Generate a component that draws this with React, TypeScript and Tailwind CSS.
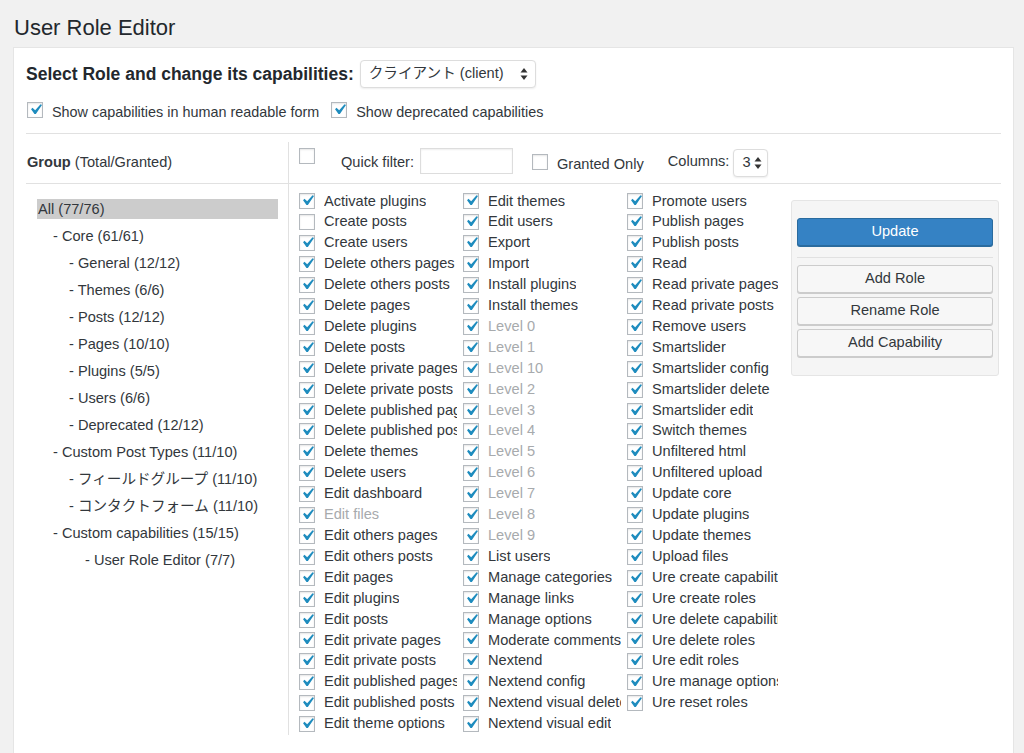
import React from "react";

const font = "font-['Liberation_Sans','Noto_Sans_CJK_JP',Arial,sans-serif]";

type Cap = { label: string; checked?: boolean; muted?: boolean };

const col1: Cap[] = [
  { label: "Activate plugins", checked: true },
  { label: "Create posts" },
  { label: "Create users", checked: true },
  { label: "Delete others pages", checked: true },
  { label: "Delete others posts", checked: true },
  { label: "Delete pages", checked: true },
  { label: "Delete plugins", checked: true },
  { label: "Delete posts", checked: true },
  { label: "Delete private pages", checked: true },
  { label: "Delete private posts", checked: true },
  { label: "Delete published pages", checked: true },
  { label: "Delete published posts", checked: true },
  { label: "Delete themes", checked: true },
  { label: "Delete users", checked: true },
  { label: "Edit dashboard", checked: true },
  { label: "Edit files", checked: true, muted: true },
  { label: "Edit others pages", checked: true },
  { label: "Edit others posts", checked: true },
  { label: "Edit pages", checked: true },
  { label: "Edit plugins", checked: true },
  { label: "Edit posts", checked: true },
  { label: "Edit private pages", checked: true },
  { label: "Edit private posts", checked: true },
  { label: "Edit published pages", checked: true },
  { label: "Edit published posts", checked: true },
  { label: "Edit theme options", checked: true },
];

const col2: Cap[] = [
  { label: "Edit themes", checked: true },
  { label: "Edit users", checked: true },
  { label: "Export", checked: true },
  { label: "Import", checked: true },
  { label: "Install plugins", checked: true },
  { label: "Install themes", checked: true },
  ...["0", "1", "10", "2", "3", "4", "5", "6", "7", "8", "9"].map((n) => ({
    label: `Level ${n}`,
    checked: true,
    muted: true,
  })),
  { label: "List users", checked: true },
  { label: "Manage categories", checked: true },
  { label: "Manage links", checked: true },
  { label: "Manage options", checked: true },
  { label: "Moderate comments", checked: true },
  { label: "Nextend", checked: true },
  { label: "Nextend config", checked: true },
  { label: "Nextend visual delete", checked: true },
  { label: "Nextend visual edit", checked: true },
];

const col3: Cap[] = [
  "Promote users",
  "Publish pages",
  "Publish posts",
  "Read",
  "Read private pages",
  "Read private posts",
  "Remove users",
  "Smartslider",
  "Smartslider config",
  "Smartslider delete",
  "Smartslider edit",
  "Switch themes",
  "Unfiltered html",
  "Unfiltered upload",
  "Update core",
  "Update plugins",
  "Update themes",
  "Upload files",
  "Ure create capabilities",
  "Ure create roles",
  "Ure delete capabilities",
  "Ure delete roles",
  "Ure edit roles",
  "Ure manage options",
  "Ure reset roles",
].map((label) => ({ label, checked: true }));

const groups = [
  { label: "All (77/76)", level: 0, active: true },
  { label: "- Core (61/61)", level: 1 },
  { label: "- General (12/12)", level: 2 },
  { label: "- Themes (6/6)", level: 2 },
  { label: "- Posts (12/12)", level: 2 },
  { label: "- Pages (10/10)", level: 2 },
  { label: "- Plugins (5/5)", level: 2 },
  { label: "- Users (6/6)", level: 2 },
  { label: "- Deprecated (12/12)", level: 2 },
  { label: "- Custom Post Types (11/10)", level: 1 },
  { label: "- フィールドグループ (11/10)", level: 2 },
  { label: "- コンタクトフォーム (11/10)", level: 2 },
  { label: "- Custom capabilities (15/15)", level: 1 },
  { label: "- User Role Editor (7/7)", level: 3 },
];

const indent = ["pl-[1px]", "pl-[16px]", "pl-[32px]", "pl-[48px]"];

function Box({ checked }: { checked?: boolean }) {
  return (
    <span className="relative inline-block h-4 w-4 shrink-0 border border-[#b4b9be] bg-white shadow-[inset_0_1px_2px_rgba(0,0,0,0.1)]">
      {checked && (
        <svg viewBox="0 0 20 20" className="absolute left-[-3px] top-[-4px] h-[21px] w-[21px]">
          <path d="M14.83 4.89l1.34.94-5.81 8.38H9.02L5.78 9.67l1.34-1.25 2.57 2.4z" fill="#1e8cbe" />
        </svg>
      )}
    </span>
  );
}

function Arrows() {
  return (
    <svg viewBox="0 0 8 14" className="h-[14px] w-[8px]">
      <path d="M4 1L7.5 5.5H0.5z" fill="#333" />
      <path d="M4 13L7.5 8.5H0.5z" fill="#333" />
    </svg>
  );
}

function CapColumn({ items, width }: { items: Cap[]; width: string }) {
  return (
    <div className="w-[164px] shrink-0">
      {items.map((c) => (
        <div key={c.label} className="flex h-[20.92px] items-center">
          <Box checked={c.checked} />
          <span
            className={`ml-[9px] overflow-hidden whitespace-nowrap text-[14.6px] ${width} ${
              c.muted ? "text-[#a7aaad]" : "text-[#32373c]"
            }`}
          >
            {c.label}
          </span>
        </div>
      ))}
    </div>
  );
}

export default function App() {
  return (
    <div className={`min-h-screen overflow-hidden bg-[#f1f1f1] pl-[13px] pr-[10px] ${font}`}>
      <h1 className="pl-[1px] pt-[14px] text-[22px] leading-[28px] text-[#23282d]">User Role Editor</h1>

      <div className="mt-[5px] border border-[#e5e5e5] bg-white px-[12px] pb-10">
        {/* Role select */}
        <div className="mt-[12px] flex h-[28px] items-center">
          <span className="text-[17.5px] font-bold text-[#23282d]">Select Role and change its capabilities:</span>
          <div className="ml-[6px] flex h-[28px] w-[176px] items-center justify-between rounded-[4px] border border-[#ddd] bg-white pl-[8px] pr-[7px] text-[14.6px] text-[#32373c] shadow-[0_1px_2px_rgba(0,0,0,0.07)]">
            <span>クライアント (client)</span>
            <Arrows />
          </div>
        </div>

        {/* Display options */}
        <div className="mt-[17px] flex h-4 items-center text-[14.4px] text-[#32373c]">
          <span className="ml-[1px]">
            <Box checked />
          </span>
          <span className="ml-[9px]">Show capabilities in human readable form</span>
          <span className="ml-[12px]">
            <Box checked />
          </span>
          <span className="ml-[9px]">Show deprecated capabilities</span>
        </div>

        <div className="mt-[12px] h-px bg-[#e1e1e1]" />

        {/* Editor table */}
        <div className="mt-[8px] grid grid-cols-[263px_1fr]">
          <div className="flex h-[42px] items-center border-b border-r border-[#e1e1e1] pl-[1px] text-[14.6px] text-[#32373c]">
            <span className="font-bold">Group</span>
            <span>&nbsp;(Total/Granted)</span>
          </div>
          <div className="flex h-[42px] items-start border-b border-[#e1e1e1] pl-[10px] text-[14.6px] text-[#32373c]">
            <span className="mt-[6px]">
              <Box />
            </span>
            <span className="ml-[26px] mt-[10px] leading-5">Quick filter:</span>
            <span className="ml-[6px] mt-[6px] h-[26px] w-[93px] border border-[#ddd] bg-white shadow-[inset_0_1px_2px_rgba(0,0,0,0.07)]" />
            <span className="ml-[19px] mt-[12px]">
              <Box />
            </span>
            <span className="ml-[9px] mt-[12px] leading-5">Granted Only</span>
            <span className="ml-[24px] mt-[9px] leading-5">Columns:</span>
            <span className="ml-[4px] mt-[7px] flex h-[28px] w-[35px] items-center justify-between rounded-[4px] border border-[#ddd] bg-white pl-[8px] pr-[5px] shadow-[0_1px_2px_rgba(0,0,0,0.07)]">
              <span>3</span>
              <Arrows />
            </span>
          </div>

          {/* Groups */}
          <div className="border-r border-[#e1e1e1] pl-[11px] pr-[10px] pt-[15px] text-[14.6px] text-[#32373c]">
            {groups.map((g) => (
              <div
                key={g.label}
                className={`mb-[7px] h-5 whitespace-nowrap leading-5 ${indent[g.level]} ${g.active ? "bg-[#cccccc]" : ""}`}
              >
                {g.label}
              </div>
            ))}
          </div>

          {/* Capabilities */}
          <div className="flex pl-[10px] pt-[7px]">
            <CapColumn items={col1} width="max-w-[133px]" />
            <CapColumn items={col2} width="max-w-[133px]" />
            <CapColumn items={col3} width="max-w-[126px]" />
            <div className="mt-[9px] flex h-[176px] w-[208px] shrink-0 flex-col rounded-[3px] border border-[#e5e5e5] bg-[#f5f5f5] px-[5px] pt-[17px] text-[14.6px]">
              <button className="h-[28px] rounded-[3px] border border-[#2a6b9e] bg-[#3582c4] text-white shadow-[0_1px_0_#2a6b9e]">
                Update
              </button>
              <div className="mt-[11px] h-px bg-[#e1e1e1]" />
              <button className="mt-[7px] h-[28px] rounded-[3px] border border-[#cccccc] bg-[#f7f7f7] text-[#32373c] shadow-[0_1px_0_#cccccc]">
                Add Role
              </button>
              <button className="mt-[4px] h-[28px] rounded-[3px] border border-[#cccccc] bg-[#f7f7f7] text-[#32373c] shadow-[0_1px_0_#cccccc]">
                Rename Role
              </button>
              <button className="mt-[4px] h-[28px] rounded-[3px] border border-[#cccccc] bg-[#f7f7f7] text-[#32373c] shadow-[0_1px_0_#cccccc]">
                Add Capability
              </button>
            </div>
          </div>
        </div>
      </div>
    </div>
  );
}
